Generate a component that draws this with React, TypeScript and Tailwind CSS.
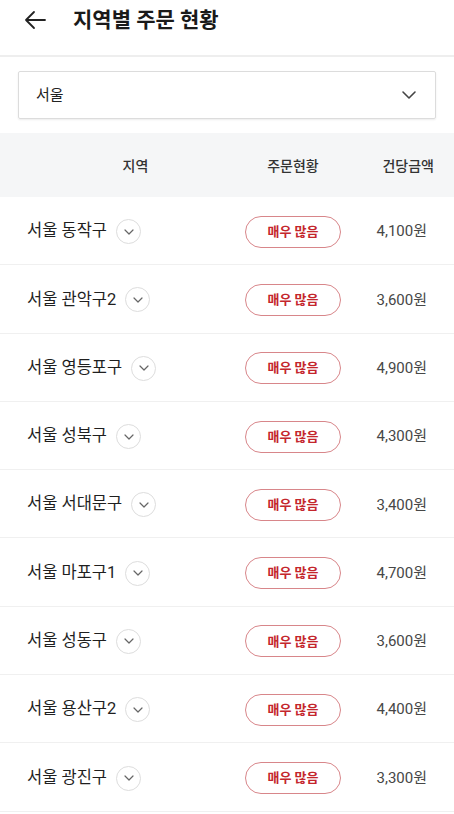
import React from "react";

const rows = [
  { name: "서울 동작구", price: "4,100원" },
  { name: "서울 관악구2", price: "3,600원" },
  { name: "서울 영등포구", price: "4,900원" },
  { name: "서울 성북구", price: "4,300원" },
  { name: "서울 서대문구", price: "3,400원" },
  { name: "서울 마포구1", price: "4,700원" },
  { name: "서울 성동구", price: "3,600원" },
  { name: "서울 용산구2", price: "4,400원" },
  { name: "서울 광진구", price: "3,300원" },
];

const font = { fontFamily: 'Roboto, "Noto Sans CJK KR", "Noto Sans", sans-serif' };

export default function App() {
  return (
    <div className="w-[454px] h-[814px] bg-white overflow-hidden text-[#222]" style={font}>
      <div className="h-[55px] flex items-start pt-[8px] pl-[24px]">
        <svg width="22" height="24" viewBox="0 0 22 24">
          <path d="M2 12 H21 M10 4 L2 12 L10 20" fill="none" stroke="#222" strokeWidth="1.8" strokeLinecap="round" strokeLinejoin="round" />
        </svg>
        <div className="ml-[27px] text-[21px] leading-[24px] font-bold text-[#1a1a1a]">지역별 주문 현황</div>
      </div>
      <div className="h-[2px] bg-[#eeeeee]" />
      <div className="px-[18px] pt-[14px] pb-[14px]">
        <div className="h-[48px] border border-[#dcdcdc] rounded-[2px] shadow-[0_1px_2px_rgba(0,0,0,0.08)] flex items-center justify-between pl-[17px] pr-[18px]">
          <span className="text-[15px] text-[#222]">서울</span>
          <svg width="16" height="10" viewBox="0 0 16 10">
            <path d="M2 2 L8 8 L14 2" fill="none" stroke="#444" strokeWidth="1.6" strokeLinecap="round" strokeLinejoin="round" />
          </svg>
        </div>
      </div>
      <div className="h-[64px] bg-[#f5f6f7] flex items-center pt-[3px] text-[14px] font-medium text-[#333]">
        <div className="w-[245px] pl-[26px] text-center">지역</div>
        <div className="w-[96px] text-center">주문현황</div>
        <div className="flex-1 text-right pr-[20px]">건당금액</div>
      </div>
      <div>
        {rows.map((r) => (
          <div key={r.name} className="h-[68.3px] border-b border-[#f0f0f0] flex items-center pt-[2px]">
            <div className="w-[245px] pl-[27px] flex items-center gap-[9px]">
              <span className="text-[16.5px] text-[#1f1f1f]">{r.name}</span>
              <span className="w-[25px] h-[25px] rounded-full border border-[#dddddd] flex items-center justify-center">
                <svg width="10" height="6" viewBox="0 0 10 6">
                  <path d="M1 1 L5 5 L9 1" fill="none" stroke="#666" strokeWidth="1.2" strokeLinecap="round" strokeLinejoin="round" />
                </svg>
              </span>
            </div>
            <div className="w-[96px] h-[32px] rounded-full border border-[#d8868a] flex items-center justify-center text-[13px] font-bold text-[#c4262c]">
              매우 많음
            </div>
            <div className="flex-1 text-right pr-[27px] text-[15px] text-[#474747]">{r.price}</div>
          </div>
        ))}
      </div>
    </div>
  );
}
